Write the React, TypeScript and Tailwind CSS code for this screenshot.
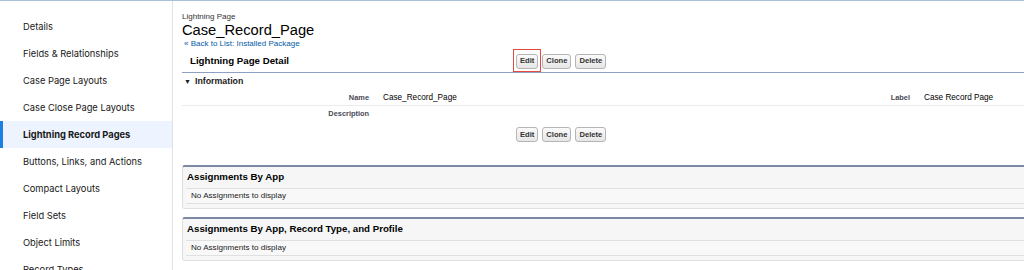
import React from 'react';

const sideItems = [
  'Details',
  'Fields & Relationships',
  'Case Page Layouts',
  'Case Close Page Layouts',
  'Lightning Record Pages',
  'Buttons, Links, and Actions',
  'Compact Layouts',
  'Field Sets',
  'Object Limits',
  'Record Types',
];

const Btn: React.FC<{ label: string; highlight?: boolean }> = ({ label, highlight }) => (
  <div className="relative flex">
    <button className="h-[15px] px-[3px] rounded-[3px] border border-[#b5b5b5] bg-gradient-to-b from-[#fbfbfb] to-[#e6e6e6] text-[7.6px] font-bold text-[#333] leading-none">
      {label}
    </button>
    {highlight && <span className="absolute -left-[3px] -right-[3px] -top-[5px] -bottom-[3px] border-[1.5px] border-[#e5483d]" />}
  </div>
);

const ButtonRow: React.FC<{ highlight?: boolean }> = ({ highlight }) => (
  <div className="flex gap-[4px]">
    <Btn label="Edit" highlight={highlight} />
    <Btn label="Clone" />
    <Btn label="Delete" />
  </div>
);

const Section: React.FC<{ title: string }> = ({ title }) => (
  <div className="border border-t-2 border-[#e0e0e0] border-t-[#7b88a6] rounded-[3px] bg-[#f6f6f6] px-[3px] pb-[4px]">
    <div className="h-[21px] flex items-center pl-[1px] text-[9.7px] font-bold text-[#000]">{title}</div>
    <div className="h-[16px] flex items-center pl-[5px] border-y border-[#e0e0e0] bg-[#f8f8f8] text-[8.1px] text-[#222]">
      No Assignments to display
    </div>
  </div>
);

export default function App() {
  return (
    <div className="w-[1024px] h-[270px] overflow-hidden bg-white border-t border-[#a9bfdc] flex font-['Liberation_Sans',Arial,sans-serif]">
      <nav className="w-[173px] shrink-0 border-r border-[#e1e1e1] pt-[12px] font-['Inter',sans-serif]">
        {sideItems.map((item) => {
          const active = item === 'Lightning Record Pages';
          return (
            <div
              key={item}
              className={
                active
                  ? 'h-[27px] flex items-center pl-[20px] text-[9.3px] text-[#181818] bg-[#eef4ff] font-bold border-l-[3px] border-[#1b7ee0]'
                  : 'h-[27px] flex items-center pl-[23px] text-[9.3px] text-[#181818]'
              }
            >
              {item}
            </div>
          );
        })}
      </nav>

      <main className="flex-1 min-w-0 overflow-hidden pl-[9px]">
        <div className="w-[1082px]">
          <div className="pt-[11px] text-[8px] leading-[10px] text-[#333]">Lightning Page</div>
          <h1 className="text-[14.7px] leading-[16px] text-[#000]">Case_Record_Page</h1>
          <div className="h-[12px] pl-[2px] flex items-center text-[8px] text-[#015ba7]">« Back to List: Installed Package</div>

          <div className="h-[23px] flex items-center border-b border-[#8fa0c6]">
            <div className="w-[334px] pl-[8px] text-[9.7px] font-bold text-[#000]">Lightning Page Detail</div>
            <ButtonRow highlight />
          </div>

          <div className="h-[18px] flex items-center pl-[2px] text-[8.8px] font-bold text-[#222]">
            <span className="text-[7px] mr-[4px]">▼</span>Information
          </div>

          <div className="grid grid-cols-[195px_346px_195px_346px] h-[15px] items-center border-b border-[#ececec]">
            <div className="text-right pr-[8px] text-[7.4px] font-bold text-[#4a4a56]">Name</div>
            <div className="pl-[6px] text-[8.2px] text-[#000]">Case_Record_Page</div>
            <div className="text-right pr-[8px] text-[7.4px] font-bold text-[#4a4a56]">Label</div>
            <div className="pl-[6px] text-[8.2px] text-[#000]">Case Record Page</div>
          </div>
          <div className="grid grid-cols-[195px_346px_195px_346px] h-[15px] items-center">
            <div className="text-right pr-[8px] text-[7.4px] font-bold text-[#4a4a56]">Description</div>
            <div />
            <div />
            <div />
          </div>

          <div className="flex items-center h-[15px] mt-[6px]">
            <div className="w-[334px]" />
            <ButtonRow />
          </div>

          <div className="mt-[23px] flex flex-col gap-[8px]">
            <Section title="Assignments By App" />
            <Section title="Assignments By App, Record Type, and Profile" />
          </div>
        </div>
      </main>
    </div>
  );
}
